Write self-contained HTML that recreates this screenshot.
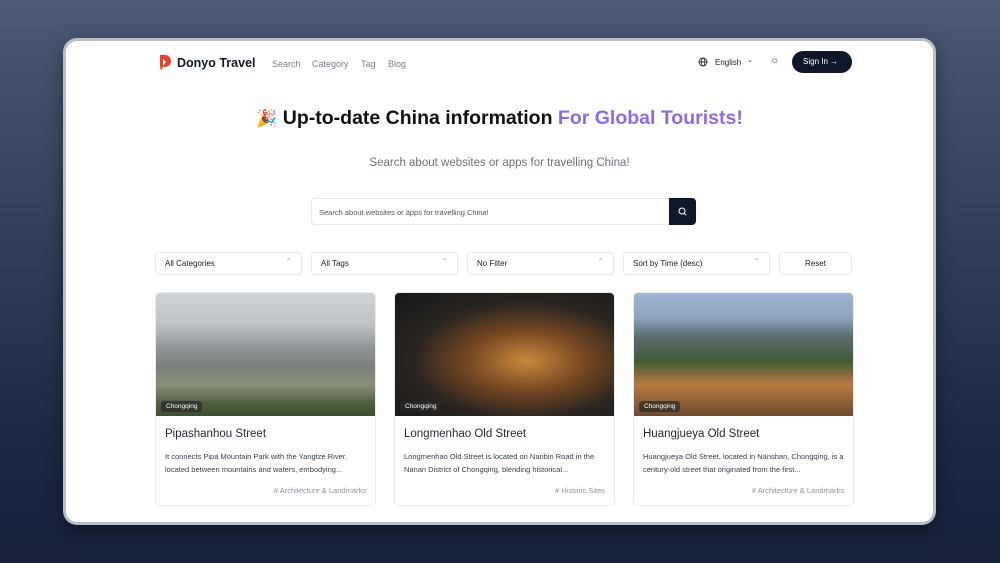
<!DOCTYPE html>
<html><head><meta charset="utf-8"><style>
*{box-sizing:border-box;margin:0;padding:0}
body{width:1000px;height:563px;overflow:hidden;font-family:"Liberation Sans",sans-serif;background:linear-gradient(180deg,#4b5a75 0%,#2e3d58 45%,#1b2844 80%,#17223a 100%);position:relative}
.frame{position:absolute;left:63px;top:38px;width:873px;height:487px;border-radius:14px;background:#b9bec8;padding:3px;box-shadow:0 6px 18px rgba(0,0,0,.4)}
.page{position:relative;width:100%;height:100%;background:#fff;border-radius:11px;overflow:hidden}
.abs{position:absolute}
.nav a{position:absolute;top:18px;font-size:9px;color:#7b8190}
.sel{position:absolute;top:211px;height:23px;border:1px solid #e6e8ec;border-radius:4px;font-size:8px;color:#222;padding:6px 9px}
.sel.c:after{content:"⌃";position:absolute;right:9px;top:4px;font-size:8px;color:#aaa}
.card{position:absolute;top:251px;width:221px;height:214px;border:1px solid #e9ebef;border-radius:5px;overflow:hidden}
.img{height:123px;position:relative}
.badge{position:absolute;left:5px;bottom:4px;background:rgba(40,40,40,.7);color:#fff;font-size:6.5px;padding:2px 5px;border-radius:3px}
.card h3{font-size:11.5px;font-weight:500;color:#1f2937;margin:12px 0 0 9px}
.card p{font-size:7.5px;line-height:13px;color:#374151;margin:10px 9px 0 9px}
.tag{position:absolute;right:9px;bottom:10px;font-size:7.5px;color:#8a93a6}
</style></head><body>
<div class="frame"><div class="page">
<svg class="abs" style="left:92px;top:13px" width="14" height="18" viewBox="0 0 14 18"><path d="M2 1h5a6 6 0 0 1 0 12H5l-2 4-1-5z" fill="#e2452b"/><path d="M5 5l3 3-3 4z" fill="#fff"/></svg>
<div class="abs" style="left:111px;top:15px;font-size:12.5px;font-weight:600;color:#111827">Donyo Travel</div>
<div class="nav"><a style="left:206px">Search</a><a style="left:246px">Category</a><a style="left:295px">Tag</a><a style="left:322px">Blog</a></div>
<svg class="abs" style="left:632px;top:16px" width="10" height="10" viewBox="0 0 10 10" fill="none" stroke="#333" stroke-width=".9"><circle cx="5" cy="5" r="4"/><ellipse cx="5" cy="5" rx="1.8" ry="4"/><path d="M1 5h8"/></svg>
<div class="abs" style="left:649px;top:17px;font-size:8px;color:#222">English</div>
<div class="abs" style="left:681px;top:15px;font-size:7px;color:#333">⌄</div>
<div class="abs" style="left:704px;top:14px;font-size:10px;color:#333">☼</div>
<div class="abs" style="left:726px;top:10px;width:60px;height:22px;border-radius:11px;background:#0f172a;color:#fff;font-size:8px;padding:6px 0 0 11px">Sign In →</div>
<div class="abs" style="left:0;width:867px;top:66px;text-align:center;font-size:19.5px;font-weight:600;color:#111"><span style="font-size:17px">🎉</span> Up-to-date China information <span style="color:#8b6cf0">For Global Tourists!</span></div>
<div class="abs" style="left:0;width:867px;top:116px;text-align:center;font-size:11.5px;color:#6b7280">Search about websites or apps for travelling China!</div>
<div class="abs" style="left:245px;top:157px;width:359px;height:27px;border:1px solid #e6e8ec;border-radius:4px 0 0 4px;font-size:7.5px;color:#555;padding:9px 0 0 7px">Search about websites or apps for travelling China!</div>
<div class="abs" style="left:603px;top:157px;width:27px;height:27px;background:#0f172a;border-radius:0 4px 4px 0"><svg width="27" height="27" viewBox="0 0 27 27" fill="none" stroke="#fff" stroke-width="1"><circle cx="13" cy="13" r="3"/><path d="M15.2 15.2l2 2"/></svg></div>
<div class="sel c" style="left:89px;width:147px">All Categories</div>
<div class="sel c" style="left:245px;width:147px">All Tags</div>
<div class="sel c" style="left:401px;width:147px">No Filter</div>
<div class="sel c" style="left:557px;width:147px">Sort by Time (desc)</div>
<div class="sel" style="left:713px;width:73px;text-align:center;padding-left:0;padding-right:0">Reset</div>
<div class="card" style="left:89px"><div class="img" style="background:linear-gradient(180deg,#cfd3d6 0%,#bfc4c7 25%,#8e9596 45%,#7a817c 60%,#8b8f7a 75%,#4d5e3c 90%,#3e4f31 100%)"><div class="badge">Chongqing</div></div><h3>Pipashanhou Street</h3><p>It connects Pipa Mountain Park with the Yangtze River, located between mountains and waters, embodying...</p><div class="tag"># Architecture &amp; Landmarks</div></div>
<div class="card" style="left:328px"><div class="img" style="background:radial-gradient(ellipse at 60% 55%,#c98a3e 0%,#7a4a22 30%,#2a2520 60%,#15171c 100%)"><div class="badge">Chongqing</div></div><h3>Longmenhao Old Street</h3><p>Longmenhao Old Street is located on Nanbin Road in the Nanan District of Chongqing, blending historical...</p><div class="tag"># Historic Sites</div></div>
<div class="card" style="left:567px"><div class="img" style="background:linear-gradient(180deg,#9fb6d0 0%,#8fa4bd 20%,#5c6f73 35%,#3f5a35 55%,#b97a42 75%,#6b4a2e 100%)"><div class="badge">Chongqing</div></div><h3>Huangjueya Old Street</h3><p>Huangjueya Old Street, located in Nanshan, Chongqing, is a century-old street that originated from the first...</p><div class="tag"># Architecture &amp; Landmarks</div></div>
</div></div>
</body></html>
